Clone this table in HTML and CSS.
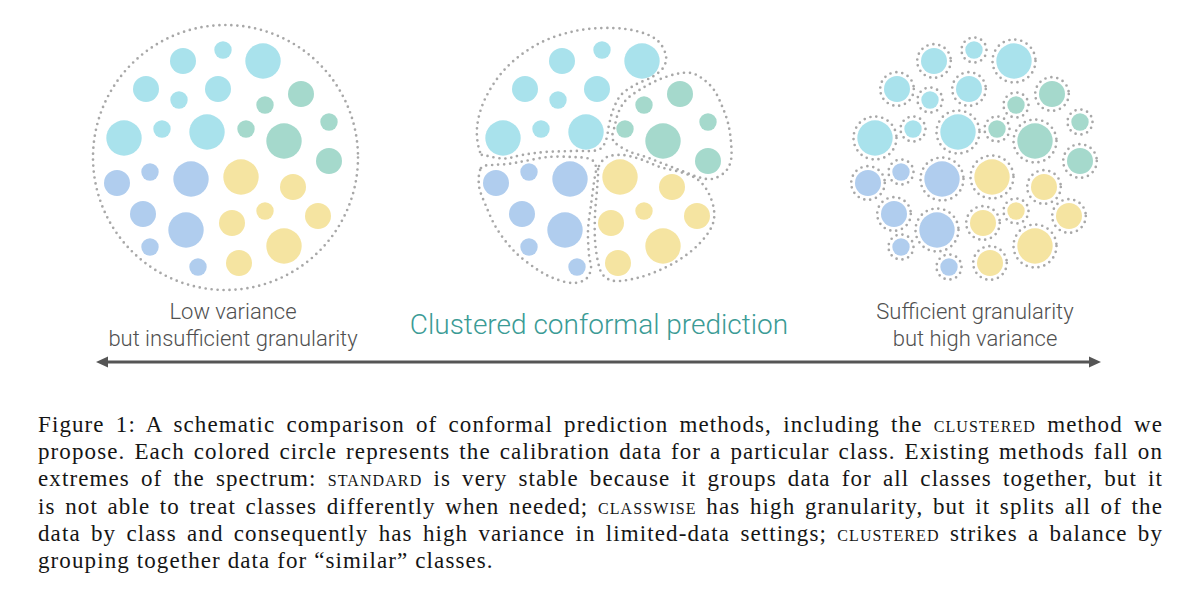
FILE: index.html
```html
<!DOCTYPE html>
<html lang="en">
<head>
<meta charset="utf-8">
<title>Figure 1: Clustered conformal prediction</title>
<link rel="stylesheet" href="styles.css">
</head>
<body>
<main class="figure">
  <svg class="art" id="art" width="1200" height="298" viewBox="0 0 1200 298" aria-label="Three schematic groupings of class calibration data"></svg>
  <div class="labels">
    <div class="label label-side">Low variance<br>but insufficient granularity</div>
    <div class="label label-mid">Clustered conformal prediction</div>
    <div class="label label-side">Sufficient granularity<br>but high variance</div>
  </div>
  <div class="axis">
    <svg class="axis-svg" width="1200" height="20" viewBox="0 0 1200 20">
      <line class="axis-line" x1="104" y1="10" x2="1093" y2="10"/>
      <polygon class="axis-head" points="96,10 108,4.5 108,15.5"/>
      <polygon class="axis-head" points="1101,10 1089,4.5 1089,15.5"/>
    </svg>
  </div>
  <p class="caption">
    <span class="line">Figure 1: A schematic comparison of conformal prediction methods, including the <span class="sc">clustered</span> method we</span>
    <span class="line">propose. Each colored circle represents the calibration data for a particular class. Existing methods fall on</span>
    <span class="line">extremes of the spectrum: <span class="sc">standard</span> is very stable because it groups data for all classes together, but it</span>
    <span class="line">is not able to treat classes differently when needed; <span class="sc">classwise</span> has high granularity, but it splits all of the</span>
    <span class="line">data by class and consequently has high variance in limited-data settings; <span class="sc">clustered</span> strikes a balance by</span>
    <span class="line last">grouping together data for “similar” classes.</span>
  </p>
</main>
<script src="figure.js"></script>
</body>
</html>
```

FILE: styles.css
```css
html, body {
  margin: 0;
  padding: 0;
  background: #ffffff;
}

.figure {
  width: 1200px;
  height: 603px;
  overflow: hidden;
}

.art {
  display: block;
}

.c-cyan { fill: #a9e2ec; }
.c-teal { fill: #a5d9cc; }
.c-blue { fill: #b0cdee; }
.c-yellow { fill: #f5e4a1; }

.dots {
  fill: none;
  stroke: #a8a8a8;
  stroke-width: 2.7;
  stroke-linecap: round;
  stroke-dasharray: 0 6;
}

.labels {
  display: flex;
  align-items: center;
  gap: 16px;
  padding-left: 83px;
  height: 54px;
}

.label {
  text-align: center;
  white-space: nowrap;
  font-family: "Roboto", "Liberation Sans", sans-serif;
  font-weight: 300;
}

.label-side {
  width: 300px;
  font-size: 22px;
  line-height: 27px;
  color: #505050;
}

.label-mid {
  width: 400px;
  margin-right: 10px;
  font-size: 28px;
  line-height: 34px;
  color: #3b9b95;
}

.axis-svg {
  display: block;
}

.axis-line {
  stroke: #555555;
  stroke-width: 3;
}

.axis-head {
  fill: #555555;
}

.caption {
  margin: 39px 0 0 38px;
  width: 1125px;
  font-family: "Liberation Serif", "Times New Roman", serif;
  font-size: 23px;
  line-height: 27.2px;
  letter-spacing: 1.1px;
  color: #151515;
}

.line {
  display: block;
  white-space: nowrap;
  text-align: justify;
  text-align-last: justify;
}

.line.last {
  text-align-last: left;
}

.sc {
  font-variant: small-caps;
}
```

FILE: figure.js
```javascript
(function () {
  var NS = "http://www.w3.org/2000/svg";
  var svg = document.getElementById("art");
  var R = { s: 8.7, m: 13, l: 17.7 };
  var COL = { c: "c-cyan", t: "c-teal", b: "c-blue", y: "c-yellow" };

  // offsets from the centre of a diagram: [dx, dy, size, colour]
  var data = [
    [-42, -96, "m", "c"], [-2, -107, "s", "c"], [38, -96, "l", "c"],
    [-79, -68, "m", "c"], [-46, -57, "s", "c"], [-7, -68, "m", "c"],
    [-101, -19, "l", "c"], [-63, -28, "s", "c"], [-18, -25, "l", "c"],
    [40, -52, "s", "t"], [76, -63, "m", "t"], [21, -28, "s", "t"],
    [59, -16, "l", "t"], [104, -35, "s", "t"], [104, 4, "m", "t"],
    [-108, 26, "m", "b"], [-75, 15, "s", "b"], [-34, 22, "l", "b"],
    [-82, 57, "m", "b"], [-39, 73, "l", "b"], [-75, 90, "s", "b"],
    [-27, 110, "s", "b"],
    [16, 20, "l", "y"], [68, 30, "m", "y"], [40, 54, "s", "y"],
    [7, 66, "m", "y"], [93, 59, "m", "y"], [59, 89, "l", "y"],
    [14, 106, "m", "y"]
  ];

  function el(name, attrs) {
    var e = document.createElementNS(NS, name);
    for (var k in attrs) e.setAttribute(k, attrs[k]);
    svg.appendChild(e);
    return e;
  }

  function smooth(pts) {
    var n = pts.length, d = "M" + pts[0][0] + "," + pts[0][1];
    for (var i = 0; i < n; i++) {
      var p0 = pts[(i - 1 + n) % n], p1 = pts[i], p2 = pts[(i + 1) % n], p3 = pts[(i + 2) % n];
      var c1x = p1[0] + (p2[0] - p0[0]) / 6, c1y = p1[1] + (p2[1] - p0[1]) / 6;
      var c2x = p2[0] - (p3[0] - p1[0]) / 6, c2y = p2[1] - (p3[1] - p1[1]) / 6;
      d += "C" + c1x.toFixed(1) + "," + c1y.toFixed(1) + " " + c2x.toFixed(1) + "," + c2y.toFixed(1) + " " + p2[0] + "," + p2[1];
    }
    return d + "Z";
  }

  function circles(cx, cy, ringed) {
    data.forEach(function (p) {
      var x = cx + p[0], y = cy + p[1], r = R[p[2]];
      if (ringed) el("circle", { cx: x, cy: y, r: r + 3.8, "class": "dots" });
      el("circle", { cx: x, cy: y, r: r, "class": COL[p[3]] });
    });
  }

  // standard: one group for all classes
  el("circle", { cx: 225.5, cy: 157.5, r: 132.5, "class": "dots" });
  circles(225, 157, false);

  // clustered: four groups
  var blobs = [
    [[480,152],[477,128],[485,99],[506,68],[538,44],[575,31],[612,28],[640,32],[658,41],[666,56],[663,68],[652,77],[635,85],[621,95],[613,110],[609,125],[606,140],[598,150],[575,151],[545,152],[522,155],[505,158.5],[488,156]],
    [[613,140],[615,125],[619,111],[627,99],[641,89],[658,80],[676,74],[691,73],[703,79],[714,90],[722,106],[728,123],[731,142],[731,160],[725,172],[712,179],[698,177],[682,171],[664,164],[646,157],[628,151]],
    [[481,168],[492,165],[508,164],[525,161],[548,157],[572,157],[590,159],[596,167],[594,182],[591,205],[588,230],[589,255],[591,268],[586,279],[572,283],[553,278],[535,268],[514,251],[497,229],[486,206],[479,186]],
    [[599,166],[607,157],[622,155],[640,159],[660,167],[680,172],[697,179],[708,192],[714,210],[712,226],[700,243],[682,258],[660,270],[637,278],[615,281],[603,275],[598,262],[595,240],[595,215],[597,190],[598,175]]
  ];
  blobs.forEach(function (b) { el("path", { d: smooth(b), "class": "dots" }); });
  circles(604, 157, false);

  // classwise: one group per class
  circles(976, 157, true);
})();
```
